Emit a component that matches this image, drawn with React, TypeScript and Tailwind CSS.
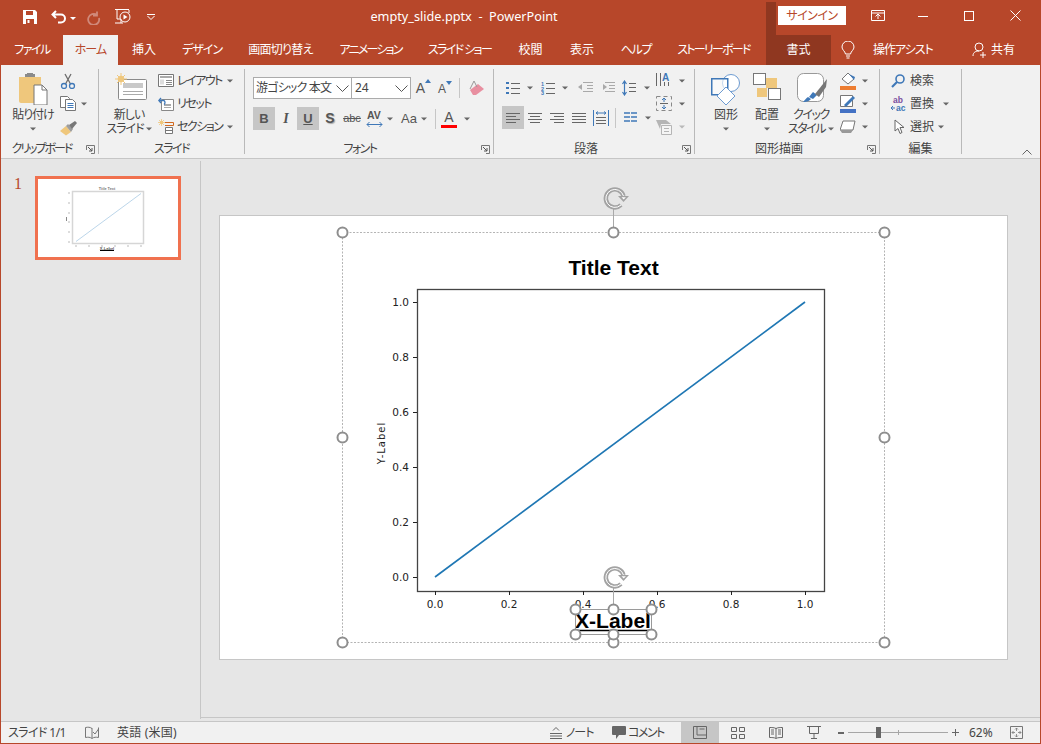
import React from "react";

const Caret = ({ className = "" }: { className?: string }) => (
  <svg width="6" height="4" viewBox="0 0 6 4" className={"shrink-0 " + className}>
    <path d="M0 .5h6L3 3.500z" fill="#666" />
  </svg>
);

const Launcher = () => (
  <svg width="9" height="9" viewBox="0 0 9 9" className="absolute right-[3px] bottom-[0px]">
    <path d="M.5 5V.5h8v8H5" fill="none" stroke="#777" />
    <path d="M2 2l4 4M6 3v3H3" fill="none" stroke="#555" />
  </svg>
);

const Group = ({ w, label, labelCls = "", launcher, children }: { w: string; label: string; labelCls?: string; launcher?: boolean; children: React.ReactNode }) => (
  <div className={"relative flex flex-col shrink-0 h-[85px] mt-[4px] border-r border-[#b9b9b9] " + w}>
    <div className="flex h-[74px]">{children}</div>
    <div className={"h-[11px] flex items-center justify-center text-[12px] leading-[11px] text-[#444] whitespace-nowrap " + labelCls}>{label}</div>
    {launcher && <Launcher />}
  </div>
);

const Tab = ({ w, active, dark, children }: { w: string; active?: boolean; dark?: boolean; children: React.ReactNode }) => (
  <div
    className={
      "h-[30px] flex items-center justify-center shrink-0 whitespace-nowrap text-[12px] " +
      w +
      (active ? " bg-[#f1f1f1] text-[#b7472a]" : dark ? " bg-[#8f3720] text-white" : " text-white")
    }
  >
    {children}
  </div>
);

const Row = ({ children }: { children: React.ReactNode }) => (
  <div className="h-[23px] flex items-center text-[12px] text-[#444] whitespace-nowrap">{children}</div>
);

const Tall = ({ w, icon, lines }: { w: string; icon: React.ReactNode; lines: React.ReactNode[] }) => (
  <div className={"flex flex-col items-center pt-[4px] shrink-0 " + w}>
    <div className="h-[35px] flex items-start justify-center">{icon}</div>
    {lines.map((l, i) => (
      <div key={i} className="h-[14px] flex items-center justify-center gap-[2px] text-[12px] leading-[14px] text-[#444] whitespace-nowrap">
        {l}
      </div>
    ))}
  </div>
);

const Btn = ({ on, w = "w-[22px]", children }: { on?: boolean; w?: string; children: React.ReactNode }) => (
  <div className={"h-[23px] flex items-center justify-center shrink-0 " + w + (on ? " bg-[#c6c6c6]" : "")}>{children}</div>
);

const AlignIc = ({ kind }: { kind: "l" | "c" | "r" | "j" }) => {
  const ys = [2, 5, 8, 11];
  const d = ys
    .map((y, i) => {
      const len = kind === "j" ? 14 : i % 2 === 0 ? 14 : 10;
      const x = kind === "l" || kind === "j" ? 0 : kind === "r" ? 14 - len : (14 - len) / 2;
      return `M${x} ${y + 0.5}h${len}`;
    })
    .join("");
  return (
    <svg width="14" height="13" viewBox="0 0 14 13">
      <path d={d} stroke="#666" fill="none" />
    </svg>
  );
};

const Handle = ({ x, y }: { x: number; y: number }) => <circle cx={x + 0.5} cy={y + 0.5} r="5" fill="#fff" stroke="#8e8e8e" strokeWidth="2" />;

const RotateIc = ({ x, y }: { x: number; y: number }) => (
  <g transform={`translate(${x} ${y})`}>
    <path d="M6 7A9 9 0 1 1 8.500 -2" fill="none" stroke="#a3a3a3" strokeWidth="4.400" />
    <path d="M6 7A9 9 0 1 1 8.500 -2" fill="none" stroke="#fff" strokeWidth="1" />
    <path d="M3 -2h11l-5.500 6z" fill="#a3a3a3" />
    <path d="M6.500 -.8h4.400l-2.200 2.400z" fill="#fff" />
  </g>
);

const xt = [
  [435, "0.0"],
  [509, "0.2"],
  [583, "0.4"],
  [657, "0.6"],
  [731, "0.8"],
  [805, "1.0"],
] as [number, string][];
const yt = [
  [577, "0.0"],
  [522, "0.2"],
  [467, "0.4"],
  [412, "0.6"],
  [357, "0.8"],
  [302, "1.0"],
] as [number, string][];

const Chart = () => (
  <svg width="787" height="443" viewBox="220 216 787 443" className="absolute left-0 top-0 overflow-visible">
    <text x="613.500" y="275" textAnchor="middle" fontFamily="Liberation Sans" fontWeight="700" fontSize="21" fill="#000">
      Title Text
    </text>
    <rect x="417.500" y="289.500" width="407" height="302" fill="#fff" stroke="#444" strokeWidth="1.300" />
    <path d="M435 577L805 302" stroke="#1f77b4" strokeWidth="1.700" fill="none" />
    {xt.map(([x, t]) => (
      <g key={t}>
        <path d={`M${x + 0.5} 591v4`} stroke="#222" />
        <text x={x} y="608" textAnchor="middle" fontFamily="DejaVu Sans" fontSize="10.500" fill="#222">
          {t}
        </text>
      </g>
    ))}
    {yt.map(([y, t]) => (
      <g key={t}>
        <path d={`M413 ${y + 0.5}h4`} stroke="#222" />
        <text x="409" y={y + 4} textAnchor="end" fontFamily="DejaVu Sans" fontSize="10.500" fill="#222">
          {t}
        </text>
      </g>
    ))}
    <text transform="translate(385 443) rotate(-90)" textAnchor="middle" fontFamily="DejaVu Sans" fontSize="10" letterSpacing="1" fill="#222">
      Y-Label
    </text>
    <text x="613" y="628" textAnchor="middle" fontFamily="Liberation Sans" fontWeight="700" fontSize="21" fill="#000">
      X-Label
    </text>
    <path d="M576 630.500h74" stroke="#000" strokeWidth="1.400" />
    <rect x="342.500" y="232.500" width="542" height="410" fill="none" stroke="#b4b4b4" strokeDasharray="2 1.500" />
    <rect x="575.500" y="609.500" width="76" height="25" fill="none" stroke="#9a9a9a" />
    <path d="M613.500 208v24M613.500 587v22" stroke="#a9a9a9" />
    <RotateIc x={615} y={198} />
    <RotateIc x={615} y={577} />
    <Handle x={342} y={232} />
    <Handle x={613} y={232} />
    <Handle x={884} y={232} />
    <Handle x={342} y={437} />
    <Handle x={884} y={437} />
    <Handle x={342} y={642} />
    <Handle x={613} y={642} />
    <Handle x={884} y={642} />
    <Handle x={575} y={609} />
    <Handle x={613} y={609} />
    <Handle x={651} y={609} />
    <Handle x={575} y={634} />
    <Handle x={613} y={634} />
    <Handle x={651} y={634} />
  </svg>
);

const Thumb = () => (
  <svg width="140" height="78" viewBox="39 179 140 78" className="block">
    <rect x="39" y="179" width="140" height="78" fill="#fff" />
    <text x="108" y="190" textAnchor="middle" fontFamily="Liberation Sans" fontSize="3.800" fontWeight="700" fill="#777">
      Title Text
    </text>
    <rect x="73.500" y="191.500" width="71" height="52" fill="#fff" stroke="#d6d6d6" strokeWidth="1.500" />
    <path d="M77 241.500L142 193.500" stroke="#bcd6ea" strokeWidth="1" />
    {[76, 89, 102, 115, 128, 141].map((x) => (
      <path key={x} d={`M${x} 246h2`} stroke="#bbb" strokeWidth="1" />
    ))}
    {[193, 203, 213, 222, 232, 242].map((y) => (
      <path key={y} d={`M69 ${y}h2`} stroke="#bbb" strokeWidth="1" />
    ))}
    <path d="M67.500 217v4" stroke="#888" />
    <text x="108" y="250" textAnchor="middle" fontFamily="Liberation Sans" fontSize="4" fontWeight="700" fill="#555">
      X-Label
    </text>
    <path d="M101 250.500h14" stroke="#000" />
  </svg>
);

export default function App() {
  return (
    <div className="w-[1041px] h-[744px] overflow-hidden flex flex-col bg-[#b7472a] font-['Noto_Sans','Noto_Sans_CJK_JP',sans-serif] [font-feature-settings:'palt'] pl-[1px] pr-[1px] pb-[1px]">
      {/* Title bar */}
      <div className="h-[35px] flex items-center shrink-0 relative text-white">
        <div className="flex items-center pl-[21px] w-[360px] shrink-0 pb-[1px]">
          <svg width="16" height="16" viewBox="0 0 16 16">
            <path d="M1 1h12l2 2v12H1z" fill="#fff" />
            <path d="M4 2h7v4H4z" fill="#b7472a" />
            <path d="M4 10h8v5H4z" fill="#b7472a" />
            <path d="M5.500 11h2v3h-2z" fill="#fff" />
          </svg>
          <svg width="18" height="16" viewBox="0 0 18 16" className="ml-[13px]">
            <path d="M5 2L1.500 5.500 5 9M2 5.500h8a4 4 0 0 1 0 8H7" fill="none" stroke="#fff" strokeWidth="2" />
          </svg>
          <svg width="6" height="4" viewBox="0 0 6 4" className="ml-[1px] mt-[3px]">
            <path d="M0 0h6L3 3z" fill="#fff" />
          </svg>
          <svg width="16" height="16" viewBox="0 0 16 16" className="ml-[10px]">
            <path d="M11 2.500v4h-4M11 6A5.500 5.500 0 1 0 13 9" fill="none" stroke="#d0897a" strokeWidth="1.800" />
          </svg>
          <svg width="18" height="18" viewBox="0 0 18 18" className="ml-[12px]">
            <path d="M1 1.500h14M3 2v9h3M9 15H1M15 2v3M7 11v4" fill="none" stroke="#fff" />
            <circle cx="11" cy="9" r="5" fill="none" stroke="#fff" />
            <path d="M9.500 6.500l4 2.500-4 2.500z" fill="#fff" />
          </svg>
          <svg width="8" height="6" viewBox="0 0 8 6" className="ml-[15px]">
            <path d="M0 .5h8M.5 2l3.500 3.500L7.500 2" fill="none" stroke="#fff" />
          </svg>
        </div>
        <div className="w-[206px] text-center text-[12.700px] whitespace-nowrap pb-[1px]">empty_slide.pptx&nbsp; -&nbsp; PowerPoint</div>
        <div className="w-[10px] h-[33px] bg-[#8f3720] ml-[199px] self-end shrink-0" />
        <div className="ml-[2px] w-[68px] h-[19px] bg-white text-[#b7472a] text-[12px] tracking-[-0.5px] flex items-center justify-center shrink-0 mb-[4px]">サインイン</div>
        <svg width="14" height="12" viewBox="0 0 14 12" className="ml-[25px] mb-[4px]">
          <path d="M.5 .5h13v10H.5zM.5 3h13M7 9V4.500M4.500 6.500L7 4l2.500 2.500" fill="none" stroke="#fff" />
        </svg>
        <div className="ml-[33px] w-[10px] h-[1px] bg-white mb-[3px]" />
        <div className="ml-[36px] w-[10px] h-[10px] border border-white mb-[4px]" />
        <svg width="11" height="11" viewBox="0 0 11 11" className="ml-[36px] mb-[4px]">
          <path d="M.5 .5l10 10M10.500 .5l-10 10" stroke="#fff" />
        </svg>
      </div>

      {/* Tabs */}
      <div className="h-[30px] flex shrink-0">
        <Tab w="w-[62px] tracking-[-1.500px]">ファイル</Tab>
        <Tab w="w-[55px] tracking-[-1px]" active>ホーム</Tab>
        <Tab w="w-[52px]">挿入</Tab>
        <Tab w="w-[64px] tracking-[-1px]">デザイン</Tab>
        <Tab w="w-[93px] tracking-[-0.700px]">画面切り替え</Tab>
        <Tab w="w-[87px] tracking-[-1.800px]">アニメーション</Tab>
        <Tab w="w-[91px] tracking-[-1.600px]">スライド ショー</Tab>
        <Tab w="w-[51px]">校閲</Tab>
        <Tab w="w-[52px]">表示</Tab>
        <Tab w="w-[56px] tracking-[-1.300px]">ヘルプ</Tab>
        <Tab w="w-[99px] tracking-[-1.750px]">ストーリーボード</Tab>
        <div className="w-[3px]" />
        <Tab w="w-[65px]" dark>書式</Tab>
        <div className="flex items-center text-white text-[12px] whitespace-nowrap">
          <svg width="14" height="19" viewBox="0 0 14 19" className="ml-[10px]">
            <path d="M4.500 13C4 10 1 9 1 6a6 6 0 0 1 12 0c0 3-3 4-3.500 7zM5 15h4M5.500 17h3" fill="none" stroke="#fff" />
          </svg>
          <span className="ml-[18px] tracking-[-1px] w-[60px]">操作アシスト</span>
          <svg width="16" height="17" viewBox="0 0 16 17" className="ml-[39px]">
            <circle cx="7" cy="5" r="4" fill="none" stroke="#fff" />
            <path d="M1 14c0-4 3-5 6-5M11 10v6M8 13h6" fill="none" stroke="#fff" />
          </svg>
          <span className="ml-[3px]">共有</span>
        </div>
      </div>

      {/* Ribbon */}
      <div className="h-[94px] bg-[#f1f1f1] border-b border-[#c6c6c6] flex shrink-0 relative">
        <Group w="w-[98px]" label="クリップボード" labelCls="pr-[16px] tracking-[-2px]" launcher>
          <Tall
            w="w-[50px] ml-[7px] tracking-[-1px]"
            icon={
              <svg width="30" height="32" viewBox="0 0 30 32">
                <path d="M1 4h22v26H3a2 2 0 0 1-2-2z" fill="#efc77c" />
                <path d="M7 4h10V1H7zM9 1h6v-1H9z" fill="#8a8a8a" />
                <path d="M16 12h8l5 5v15H16z" fill="#fff" stroke="#777" />
                <path d="M24 12v5h5" fill="none" stroke="#777" />
              </svg>
            }
            lines={["貼り付け", <Caret key="c" />]}
          />
          <div className="flex flex-col text-[12px] ml-[2px]">
            <Row>
              <svg width="16" height="16" viewBox="0 0 16 16">
                <path d="M5 1l5.500 10M11 1L5.500 11" stroke="#6d6d6d" strokeWidth="1.300" fill="none" />
                <circle cx="4" cy="13" r="2.500" fill="none" stroke="#3f78b8" strokeWidth="1.300" />
                <circle cx="12" cy="13" r="2.500" fill="none" stroke="#3f78b8" strokeWidth="1.300" />
              </svg>
            </Row>
            <Row>
              <svg width="16" height="15" viewBox="0 0 16 15">
                <path d="M.5 .5h7l2 2v9H.5z" fill="#fff" stroke="#777" />
                <path d="M5.500 3.500h7l3 3v8h-10z" fill="#fff" stroke="#777" />
                <path d="M7.500 7.500h6M7.500 9.500h6M7.500 11.500h6" stroke="#3f78b8" />
              </svg>
              <Caret className="ml-[5px]" />
            </Row>
            <Row>
              <svg width="17" height="15" viewBox="0 0 17 15" className="mt-[4px]">
                <path d="M0 10l6-5 5 6-5 3.500z" fill="#efc77c" />
                <path d="M6 5l2-2 5 5-2 3z" fill="#9d9d9d" />
                <path d="M9 4l6-4 2 2-5 6z" fill="#777" />
              </svg>
            </Row>
          </div>
        </Group>

        <Group w="w-[146px]" label="スライド" labelCls="tracking-[-1.500px]">
          <Tall
            w="w-[58px] ml-[1px] tracking-[-1px]"
            icon={
              <svg width="32" height="28" viewBox="0 0 32 28" className="ml-[4px]">
                <rect x="3.500" y="6.500" width="28" height="20" rx="1" fill="#fff" stroke="#8a8a8a" />
                <path d="M8 10h20v5H8z" fill="#c9c9c9" />
                <path d="M8 18.500h20M8 21.500h20" stroke="#aaa" />
                <circle cx="6" cy="6" r="3.200" fill="#efc77c" />
                <path d="M6 0v12M0 6h12M2 2l8 8M10 2l-8 8" stroke="#efc77c" />
              </svg>
            }
            lines={[
              "新しい",
              <span key="s" className="flex items-center gap-[2px]">
                スライド
                <Caret />
              </span>,
            ]}
          />
          <div className="flex flex-col">
            <Row>
              <svg width="16" height="13" viewBox="0 0 16 13">
                <path d="M.5 .5h15v12H.5z" fill="#fff" stroke="#777" />
                <path d="M2 2h12v2H2z" fill="#aaa" />
                <path d="M2 5.500h4v5H2z" fill="#ddd" />
                <path d="M8 6.500h6M8 8.500h6M8 10.500h6" stroke="#888" />
              </svg>
              <span className="ml-[3px] tracking-[-1.500px]">レイアウト</span>
              <Caret className="ml-[5px]" />
            </Row>
            <Row>
              <svg width="16" height="14" viewBox="0 0 16 14">
                <path d="M3.500 2.500h12v11H3.500z" fill="#fff" stroke="#888" />
                <path d="M6 7h7v2H6zM6 10h7v1H6z" fill="#aaa" />
                <path d="M1 3.500h5a2.500 2.500 0 0 1 0 4M3 1L.8 3.500 3 6" fill="none" stroke="#3f78b8" strokeWidth="1.300" />
              </svg>
              <span className="ml-[3px] tracking-[-1.500px]">リセット</span>
            </Row>
            <Row>
              <svg width="16" height="15" viewBox="0 0 16 15">
                <circle cx="3.500" cy="3.500" r="1.800" fill="#efc77c" />
                <path d="M3.500 0v7M0 3.500h7M1 1l5 5M6 1L1 6" stroke="#efc77c" strokeWidth=".8" />
                <path d="M7 3.500h8.500v3H7" fill="none" stroke="#d2691e" />
                <path d="M7.500 8.500h7v6h-7zM8 11.500h6" fill="#fff" stroke="#777" />
              </svg>
              <span className="ml-[3px] tracking-[-1.500px]">セクション</span>
              <Caret className="ml-[5px]" />
            </Row>
          </div>
        </Group>

        <Group w="w-[249px]" label="フォント" labelCls="pr-[18px] tracking-[-1.500px]" launcher>
          <div className="flex flex-col pl-[8px] pt-[8px]">
            <div className="flex items-center h-[22px]">
              <div className="w-[99px] h-[22px] bg-white border border-[#ababab] flex items-center justify-between pl-[2px] pr-[2px] text-[12px] text-[#444] whitespace-nowrap">
                <span className="tracking-[-0.800px]">游ゴシック 本文</span>
                <svg width="13" height="7" viewBox="0 0 13 7" className="shrink-0">
                  <path d="M.5 .5l6 6 6-6" fill="none" stroke="#555" />
                </svg>
              </div>
              <div className="w-[59px] h-[22px] bg-white border border-l-0 border-[#ababab] flex items-center justify-between pl-[3px] pr-[2px] text-[12px] text-[#444]">
                <span>24</span>
                <svg width="13" height="7" viewBox="0 0 13 7">
                  <path d="M.5 .5l6 6 6-6" fill="none" stroke="#555" />
                </svg>
              </div>
              <div className="w-[21px] ml-[2px] flex justify-center text-[14px] font-['Liberation_Sans'] text-[#555] relative">
                A<svg width="6" height="4" viewBox="0 0 6 4" className="mt-[1px]"><path d="M3 0l3 4H0z" fill="#3f78b8" /></svg>
              </div>
              <div className="w-[22px] flex justify-center text-[12px] mt-[2px] font-['Liberation_Sans'] text-[#555]">
                A<svg width="6" height="4" viewBox="0 0 6 4" className="mt-[1px]"><path d="M3 4l3-4H0z" fill="#3f78b8" /></svg>
              </div>
              <div className="w-[1px] h-[20px] bg-[#c6c6c6] ml-[3px]" />
              <svg width="16" height="17" viewBox="0 0 16 17" className="ml-[9px]">
                <path d="M1 10l8-6 6 5-8 6H4z" fill="#e88fa0" />
                <path d="M1 9l4-8 3 6" fill="none" stroke="#999" />
              </svg>
            </div>
            <div className="flex items-center h-[23px] mt-[8px] text-[#555]">
              <Btn on><span className="font-['Liberation_Sans'] font-bold text-[13px]">B</span></Btn>
              <Btn><span className="font-['Liberation_Serif'] italic font-bold text-[14px]">I</span></Btn>
              <Btn on><span className="font-['Liberation_Sans'] font-bold text-[13px] underline">U</span></Btn>
              <Btn><span className="font-['Liberation_Sans'] font-bold text-[14px] [text-shadow:1px_1px_1px_#aaa]">S</span></Btn>
              <Btn><span className="font-['Liberation_Sans'] text-[11px] line-through">abc</span></Btn>
              <Btn w="w-[24px]">
                <svg width="18" height="18" viewBox="0 0 18 18">
                  <text x="1" y="9" fontFamily="Liberation Sans" fontSize="10.500" fontWeight="700" fill="#555">AV</text>
                  <path d="M1 14.500h15M3.500 12L1 14.500 3.500 17M13.500 12l2.500 2.500L13.500 17" fill="none" stroke="#3f78b8" />
                </svg>
              </Btn>
              <Caret />
              <span className="ml-[8px] font-['Liberation_Sans'] text-[13px]">Aa</span>
              <Caret className="ml-[4px]" />
              <div className="w-[1px] h-[20px] bg-[#c6c6c6] ml-[8px]" />
              <div className="ml-[5px] w-[16px] h-[20px] flex flex-col items-center">
                <span className="font-['Liberation_Sans'] text-[14px] leading-[16px]">A</span>
                <div className="w-[16px] h-[3px] bg-[#ff0000]" />
              </div>
              <Caret className="ml-[7px]" />
            </div>
          </div>
        </Group>

        <Group w="w-[201px]" label="段落" labelCls="pr-[16px]" launcher>
          <div className="flex flex-col pl-[8px] pt-[7px] w-[162px] shrink-0">
            <div className="flex items-center h-[23px]">
              <svg width="14" height="14" viewBox="0 0 14 14" className="ml-[4px]">
                <path d="M0 1h3v2H0zM0 6h3v2H0zM0 11h3v2H0z" fill="#3f78b8" />
                <path d="M5 2.500h9M5 7.500h9M5 12.500h9" stroke="#666" />
              </svg>
              <Caret className="ml-[7px]" />
              <svg width="14" height="14" viewBox="0 0 14 14" className="ml-[8px]">
                <text x="0" y="5" fontSize="5.500" fontWeight="700" fill="#3f78b8" fontFamily="Liberation Sans">1</text>
                <text x="0" y="9.500" fontSize="5.500" fontWeight="700" fill="#3f78b8" fontFamily="Liberation Sans">2</text>
                <text x="0" y="14" fontSize="5.500" fontWeight="700" fill="#3f78b8" fontFamily="Liberation Sans">3</text>
                <path d="M5 2.500h9M5 7.500h9M5 12.500h9" stroke="#666" />
              </svg>
              <Caret className="ml-[7px]" />
              <svg width="15" height="12" viewBox="0 0 15 12" className="ml-[10px]">
                <path d="M5 .5h10M9 3.500h6M9 6.500h6M5 9.500h10" stroke="#a9a9a9" />
                <path d="M0 5l4-3v6z" fill="#a9a9a9" />
              </svg>
              <svg width="15" height="12" viewBox="0 0 15 12" className="ml-[7px]">
                <path d="M5 .5h10M9 3.500h6M9 6.500h6M5 9.500h10" stroke="#a9a9a9" />
                <path d="M7 5L3 2v6z" fill="#a9a9a9" />
              </svg>
              <svg width="14" height="16" viewBox="0 0 14 16" className="ml-[7px]">
                <path d="M2.500 2v12M.5 4l2-3 2 3M.5 12l2 3 2-3" fill="none" stroke="#3f78b8" strokeWidth="1.200" />
                <path d="M7 3.500h7M7 7.500h7M7 11.500h7" stroke="#666" />
              </svg>
              <Caret className="ml-[8px]" />
            </div>
            <div className="flex items-center h-[23px] mt-[7px]">
              <Btn on><AlignIc kind="l" /></Btn>
              <Btn><AlignIc kind="c" /></Btn>
              <Btn><AlignIc kind="r" /></Btn>
              <Btn><AlignIc kind="j" /></Btn>
              <Btn>
                <svg width="16" height="16" viewBox="0 0 16 16">
                  <path d="M.5 0v16M15.500 0v16" stroke="#3f78b8" />
                  <path d="M3 3h10M5 1.500L3 3l2 1.500M11 1.500L13 3l-2 1.500" fill="none" stroke="#3f78b8" />
                  <path d="M3 7.500h10M3 10.500h10M3 13.500h10" stroke="#666" />
                </svg>
              </Btn>
              <div className="w-[1px] h-[20px] bg-[#c6c6c6] ml-[3px]" />
              <svg width="13" height="11" viewBox="0 0 13 11" className="ml-[8px]">
                <path d="M0 1h6M0 5h6M0 9h6M7 1h6M7 5h6M7 9h6" stroke="#3f78b8" strokeWidth="1.300" />
              </svg>
              <Caret className="ml-[8px]" />
            </div>
          </div>
          <div className="flex flex-col">
            <Row>
              <svg width="16" height="17" viewBox="0 0 16 17">
                <text x="6" y="9" fontSize="10" fontWeight="700" fill="#3f78b8" fontFamily="Liberation Sans">A</text>
                <path d="M.5 1v13M4.500 1v13M8.500 10v4M12.500 10v4" stroke="#666" />
              </svg>
              <Caret className="ml-[7px]" />
            </Row>
            <Row>
              <svg width="16" height="15" viewBox="0 0 16 15">
                <path d="M.5 .5h15v14H.5z" fill="none" stroke="#888" strokeDasharray="4 3" />
                <path d="M8 2v4M6 4l2-2 2 2M8 13V9M6 11l2 2 2-2" fill="none" stroke="#3f78b8" />
                <path d="M4 7.500h8" stroke="#666" />
              </svg>
              <Caret className="ml-[7px]" />
            </Row>
            <Row>
              <svg width="16" height="16" viewBox="0 0 16 16">
                <path d="M0 1h10l5 4H5l-1 5z" fill="#b5b5b5" />
                <path d="M5.500 6.500h10v9h-10z" fill="#f5f5f5" stroke="#b5b5b5" />
                <path d="M8 9.500h5M8 12.500h5" stroke="#b5b5b5" />
              </svg>
              <Caret className="ml-[7px] opacity-40" />
            </Row>
          </div>
        </Group>

        <Group w="w-[185px]" label="図形描画" labelCls="pr-[16px]" launcher>
          <Tall
            w="w-[46px] ml-[8px]"
            icon={
              <svg width="30" height="33" viewBox="0 0 30 33" className="mt-[1px]">
                <circle cx="20" cy="9" r="8.500" fill="#fff" stroke="#6d9bd1" />
                <rect x=".750" y="4.750" width="16" height="16" fill="#fff" fillOpacity=".6" stroke="#3f78b8" strokeWidth="1.500" />
                <path d="M15 13l9 9-9 9-9-9z" fill="#fff" stroke="#6d9bd1" />
              </svg>
            }
            lines={["図形", <Caret key="c" />]}
          />
          <Tall
            w="w-[36px]"
            icon={
              <svg width="28" height="28" viewBox="0 0 28 28">
                <path d="M13 5h11v10H13zM4 15h10v9H4z" fill="#efc77c" />
                <rect x=".5" y=".5" width="12" height="11" fill="#fff" stroke="#777" />
                <rect x="15.500" y="15.500" width="12" height="11" fill="#fff" stroke="#777" />
              </svg>
            }
            lines={["配置", <Caret key="c" />]}
          />
          <Tall
            w="w-[52px] tracking-[-1.500px]"
            icon={
              <svg width="32" height="32" viewBox="0 0 32 32" className="ml-[4px]">
                <rect x=".5" y=".5" width="26" height="28" rx="6" fill="#fff" stroke="#999" />
                <path d="M12 24l4-5 4 3-4 4z" fill="#3f78b8" />
                <path d="M6 29c5 0 6-1 8-3l-3-2c-2 1-3 3-5 5z" fill="#3f78b8" />
                <path d="M18 21l8-10 4-5-1 8-7 10z" fill="#777" />
              </svg>
            }
            lines={[
              "クイック",
              <span key="s" className="flex items-center gap-[3px]">
                スタイル
                <Caret />
              </span>,
            ]}
          />
          <div className="flex flex-col ml-[3px]">
            <Row>
              <svg width="16" height="18" viewBox="0 0 16 18">
                <path d="M2 7l6-6 6 6-6 5z" fill="#fff" stroke="#777" />
                <path d="M9 2l6 3-1 3z" fill="#3f78b8" />
                <path d="M0 14h16v4H0z" fill="#ed7d31" />
              </svg>
              <Caret className="ml-[6px]" />
            </Row>
            <Row>
              <svg width="16" height="18" viewBox="0 0 16 18">
                <path d="M.5 .5h12v11H.5z" fill="#fff" stroke="#777" />
                <path d="M4 10l9-9 2 2-9 9z" fill="#3f78b8" />
                <path d="M0 14h16v4H0z" fill="#4472c4" />
              </svg>
              <Caret className="ml-[6px]" />
            </Row>
            <Row>
              <svg width="16" height="14" viewBox="0 0 16 14">
                <path d="M3 1h12l-2 9H0z" fill="#fff" stroke="#777" />
                <path d="M15 1l-2 9-2 3H2l-2-3h13z" fill="#999" />
              </svg>
              <Caret className="ml-[6px]" />
            </Row>
          </div>
        </Group>

        <Group w="w-[82px]" label="編集">
          <div className="flex flex-col pl-[11px] text-[12px]">
            <Row>
              <svg width="14" height="14" viewBox="0 0 14 14">
                <circle cx="9" cy="5" r="4" fill="none" stroke="#3f78b8" strokeWidth="1.600" />
                <path d="M6 8l-5 5" stroke="#3f78b8" strokeWidth="2.200" />
              </svg>
              <span className="ml-[5px]">検索</span>
            </Row>
            <Row>
              <svg width="16" height="16" viewBox="0 0 16 16">
                <text x="2" y="7" fontSize="8.500" fontWeight="700" fill="#7b4fa0" fontFamily="Liberation Sans">ab</text>
                <text x="5" y="15" fontSize="8.500" fontWeight="700" fill="#3f78b8" fontFamily="Liberation Sans">ac</text>
                <path d="M0 12h4M2 10l-2 2 2 2" fill="none" stroke="#3f78b8" />
              </svg>
              <span className="ml-[3px]">置換</span>
              <Caret className="ml-[9px]" />
            </Row>
            <Row>
              <svg width="12" height="16" viewBox="0 0 12 16" className="ml-[3px]">
                <path d="M1 1v11l3-2.500 2 5 2-1-2-5h4z" fill="#fff" stroke="#666" />
              </svg>
              <span className="ml-[4px]">選択</span>
              <Caret className="ml-[4px]" />
            </Row>
          </div>
        </Group>

        <svg width="10" height="6" viewBox="0 0 10 6" className="absolute right-[8px] bottom-[3px]">
          <path d="M.5 5.500L5 1l4.500 4.500" fill="none" stroke="#666" />
        </svg>
      </div>

      {/* Main */}
      <div className="flex-1 flex bg-[#e6e6e6] min-h-0">
        <div className="w-[200px] h-[558px] border-r border-[#c6c6c6] shrink-0 mt-[2px] flex items-start pt-[15px]">
          <span className="w-[34px] pl-[13px] text-[16px] leading-[16px] text-[#b7472a] font-['Liberation_Serif']">1</span>
          <div className="w-[146px] h-[84px] border-[3px] border-[#f0714f] bg-white shrink-0">
            <Thumb />
          </div>
        </div>
        <div className="flex-1 flex flex-col min-w-0">
          <div className="flex-1 pl-[18px] pt-[56px]">
            <div className="relative w-[789px] h-[445px] bg-white border border-[#c6c6c6]">
              <Chart />
            </div>
          </div>
          <div className="h-[4px] border-t border-[#c6c6c6] shrink-0" />
        </div>
      </div>

      {/* Status bar */}
      <div className="h-[22px] bg-[#f1f1f1] border-t border-[#c6c6c6] flex items-center text-[12px] text-[#444] whitespace-nowrap shrink-0">
        <span className="ml-[7px] w-[66px] tracking-[-0.600px]">スライド 1/1</span>
        <svg width="14" height="14" viewBox="0 0 14 14" className="ml-[11px]">
          <path d="M7 2.500C5 1 3 1 .5 1.500v10c2.500-.5 4.500-.5 6.500 1 2-1.500 4-1.500 6.500-1v-10" fill="none" stroke="#777" />
          <path d="M7 2v10M8 6l2 2 3.500-5" fill="none" stroke="#777" />
        </svg>
        <span className="ml-[18px] w-[61px] tracking-[0.200px]">英語 (米国)</span>
        <svg width="12" height="12" viewBox="0 0 12 12" className="ml-[372px]">
          <path d="M3 3.500l3-3 3 3M0 6.500h12M0 9h12M0 11.500h12" fill="none" stroke="#666" />
        </svg>
        <span className="ml-[4px] w-[26px] tracking-[-1px]">ノート</span>
        <svg width="14" height="13" viewBox="0 0 14 13" className="ml-[20px]">
          <path d="M1 0h12a1 1 0 0 1 1 1v7a1 1 0 0 1-1 1H7l-3 4V9H1a1 1 0 0 1-1-1V1a1 1 0 0 1 1-1z" fill="#666" />
        </svg>
        <span className="ml-[2px] w-[34px] tracking-[-1.500px]">コメント</span>
        <div className="ml-[19px] w-[38px] h-[21px] bg-[#c6c6c6] flex items-center justify-center shrink-0">
          <svg width="14" height="13" viewBox="0 0 14 13">
            <path d="M.5 .5h13v12H.5zM4 .5v8.500h9.500M6.500 3h5" fill="none" stroke="#666" />
          </svg>
        </div>
        <svg width="14" height="12" viewBox="0 0 14 12" className="ml-[12px]">
          <path d="M.5 .5h5v4h-5zM8.500 .5h5v4h-5zM.5 7.500h5v4h-5zM8.500 7.500h5v4h-5z" fill="none" stroke="#666" />
        </svg>
        <svg width="14" height="12" viewBox="0 0 14 12" className="ml-[24px]">
          <path d="M.5 .5c2 0 5 0 6.500 1 1.500-1 4.500-1 6.500-1v10c-2 0-5 0-6.500 1-1.500-1-4.500-1-6.500-1zM7 1v10M2 3h3M2 5h3M2 7h3M9 3h3M9 5h3M9 7h3" fill="none" stroke="#666" />
        </svg>
        <svg width="14" height="13" viewBox="0 0 14 13" className="ml-[24px]">
          <path d="M0 .5h14M2.500 1v6.500h9V1M7 7.500V12M4 12.500h6" fill="none" stroke="#666" />
        </svg>
        <div className="ml-[17px] w-[6px] h-[2px] bg-[#666]" />
        <div className="ml-[4px] w-[100px] h-[9px] relative flex items-center">
          <div className="w-full h-[1px] bg-[#a6a6a6]" />
          <div className="absolute left-[50px] top-[2px] w-[1px] h-[5px] bg-[#a6a6a6]" />
          <div className="absolute left-[28px] top-[-1px] w-[5px] h-[11px] bg-[#666]" />
        </div>
        <svg width="7" height="7" viewBox="0 0 7 7" className="ml-[4px]">
          <path d="M0 3.500h7M3.500 0v7" stroke="#666" />
        </svg>
        <span className="ml-[10px] w-[27px]">62%</span>
        <svg width="13" height="13" viewBox="0 0 13 13" className="ml-[14px]">
          <path d="M.5 .5h12v12H.5z" fill="none" stroke="#777" />
          <path d="M6.500 2v3M5 3.500l1.500-1.500L8 3.500M6.500 11V8M5 9.500L6.500 11 8 9.500M2 6.500h3M3.500 5L2 6.500 3.500 8M11 6.500H8M9.500 5L11 6.500 9.500 8" fill="none" stroke="#777" strokeWidth=".8" />
        </svg>
      </div>
    </div>
  );
}
